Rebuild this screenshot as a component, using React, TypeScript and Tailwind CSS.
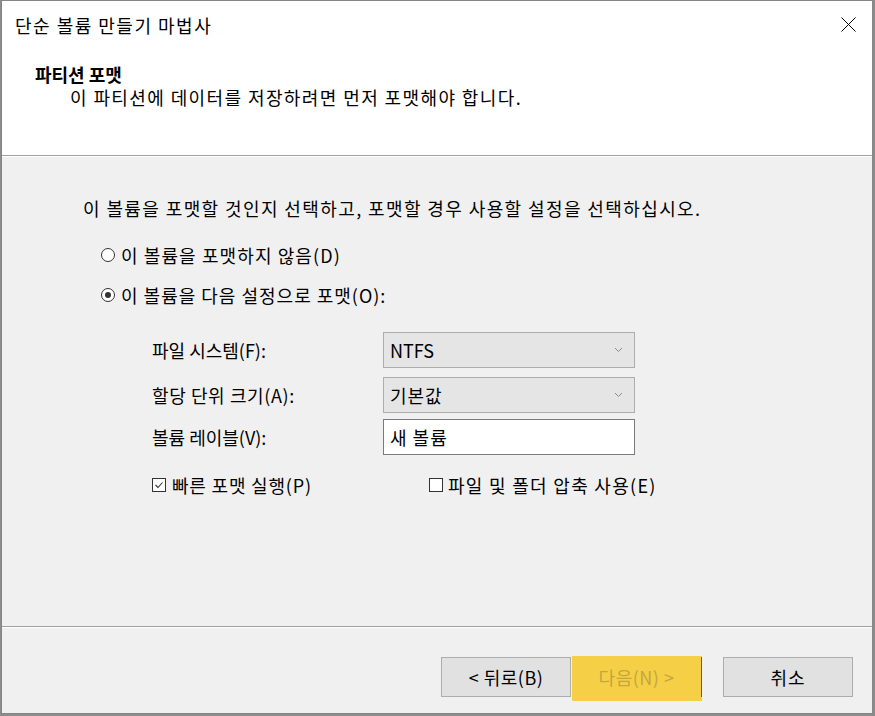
import React from "react";

function Radio({ checked }: { checked?: boolean }) {
  return (
    <span className="w-[14px] h-[14px] rounded-full border border-[#333333] bg-white flex items-center justify-center shrink-0">
      {checked && <span className="w-[6px] h-[6px] rounded-full bg-[#333333]" />}
    </span>
  );
}

function Check({ checked }: { checked?: boolean }) {
  return (
    <span className="w-[14px] h-[14px] border border-[#333333] bg-white flex items-center justify-center shrink-0">
      {checked && (
        <svg width="10" height="10" viewBox="0 0 10 10">
          <path d="M1.5 5 L4 7.5 L8.5 2.5" fill="none" stroke="#333" strokeWidth="1.1" />
        </svg>
      )}
    </span>
  );
}

function Chevron() {
  return (
    <svg width="9" height="6" viewBox="0 0 9 6" className="shrink-0">
      <path d="M1 1 L4.5 4.5 L8 1" fill="none" stroke="#8a8a8a" strokeWidth="1" />
    </svg>
  );
}

export default function App() {
  return (
    <div className="w-[875px] h-[716px] bg-[#8c8c8c] overflow-hidden font-['Noto_Sans_CJK_KR','Noto_Sans',sans-serif] text-[18px] text-black">
      <div className="ml-px w-[872px] h-[714px] border border-[#858585] bg-[#f0f0f0] flex flex-col">
        {/* title bar */}
        <div className="h-[47px] bg-white flex items-center justify-between pl-[13px] pr-[16px] shrink-0">
          <span className="leading-[24px] tracking-[1.5px]">단순 볼륨 만들기 마법사</span>
          <svg width="15" height="15" viewBox="0 0 15 15">
            <path d="M0.5 0.5 L14.5 14.5 M14.5 0.5 L0.5 14.5" stroke="#000" strokeWidth="1" fill="none" />
          </svg>
        </div>
        {/* header */}
        <div className="h-[107px] bg-white pt-[15px] shrink-0">
          <div className="pl-[33px] font-bold leading-[23px]">파티션 포맷</div>
          <div className="pl-[68px] leading-[23px] tracking-[1.4px]">이 파티션에 데이터를 저장하려면 먼저 포맷해야 합니다.</div>
        </div>
        <div className="h-px bg-[#a0a0a0] shrink-0" />
        <div className="h-px bg-white shrink-0" />
        {/* body */}
        <div className="flex-1 flex flex-col">
          <div className="mt-[39px] pl-[81px] leading-[24px] h-[24px] tracking-[1.4px] whitespace-nowrap">
            이 볼륨을 포맷할 것인지 선택하고, 포맷할 경우 사용할 설정을 선택하십시오.
          </div>
          <div className="mt-[23px] h-[24px] pl-[99px] flex items-center gap-[6px]">
            <Radio />
            <span className="leading-[24px] tracking-[1.1px]">이 볼륨을 포맷하지 않음(D)</span>
          </div>
          <div className="mt-[16px] h-[24px] pl-[99px] flex items-center gap-[6px]">
            <Radio checked />
            <span className="leading-[24px] tracking-[1px]">이 볼륨을 다음 설정으로 포맷(O):</span>
          </div>

          <div className="mt-[25px] h-[36px] flex items-center pl-[150px]">
            <span className="w-[231px] leading-[24px]">파일 시스템(F):</span>
            <div className="w-[252px] h-[36px] bg-[#e5e5e5] border border-[#adadad] flex items-center justify-between pl-[6px] pr-[11px]">
              <span>NTFS</span>
              <Chevron />
            </div>
          </div>
          <div className="mt-[9px] h-[36px] flex items-center pl-[150px]">
            <span className="w-[231px] leading-[24px] tracking-[0.6px]">할당 단위 크기(A):</span>
            <div className="w-[252px] h-[36px] bg-[#e5e5e5] border border-[#adadad] flex items-center justify-between pl-[6px] pr-[11px]">
              <span className="tracking-[1px]">기본값</span>
              <Chevron />
            </div>
          </div>
          <div className="mt-[6px] h-[36px] flex items-center pl-[150px]">
            <span className="w-[231px] leading-[24px]">볼륨 레이블(V):</span>
            <div className="w-[252px] h-[36px] bg-white border border-[#7a7a7a] flex items-center pl-[6px]">
              <span className="tracking-[1px]">새 볼륨</span>
            </div>
          </div>

          <div className="mt-[18px] h-[24px] flex items-center pl-[150px]">
            <div className="w-[277px] flex items-center gap-[6px]">
              <Check checked />
              <span className="leading-[24px] tracking-[0.8px]">빠른 포맷 실행(P)</span>
            </div>
            <div className="flex items-center gap-[5px]">
              <Check />
              <span className="leading-[24px] tracking-[1.3px]">파일 및 폴더 압축 사용(E)</span>
            </div>
          </div>
        </div>
        <div className="h-px bg-[#a0a0a0] shrink-0" />
        <div className="h-px bg-white shrink-0" />
        {/* buttons */}
        <div className="h-[85px] shrink-0 flex items-start pt-[29px] pl-[439px]">
          <div className="w-[130px] h-[40px] bg-[#e1e1e1] border border-[#adadad] flex items-center justify-center tracking-[0.5px]">
            &lt; 뒤로(B)
          </div>
          <div className="ml-px -mt-px w-[130px] h-[45px] bg-[#f5d046] flex items-start">
            <div className="mt-px w-[129px] h-[40px] flex items-center justify-center text-[#c4a63c] tracking-[0.5px]">다음(N) &gt;</div>
            <div className="mt-px w-px h-[40px] bg-[#0078d7]" />
          </div>
          <div className="ml-[21px] w-[130px] h-[40px] bg-[#e1e1e1] border border-[#adadad] flex items-center justify-center tracking-[1px]">
            취소
          </div>
        </div>
      </div>
    </div>
  );
}
